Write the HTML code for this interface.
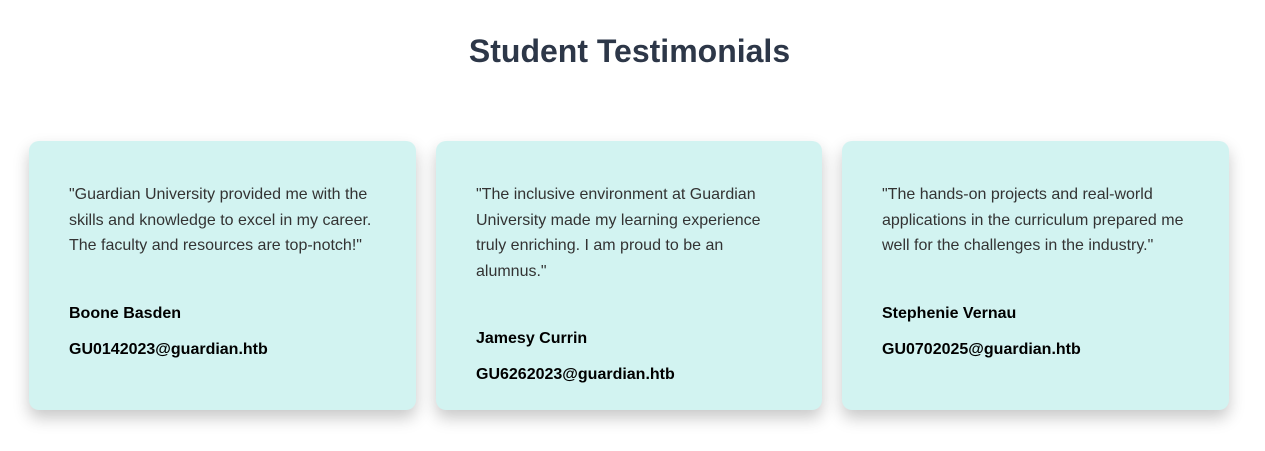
<!DOCTYPE html>
<html><head><style>
body{margin:0;background:#fff;font-family:"Liberation Sans",sans-serif;width:1265px;height:451px;overflow:hidden}
h1{margin:0;position:absolute;top:31px;left:-3px;width:1265px;text-align:center;font-size:32px;line-height:40px;color:#2d3748;font-weight:bold}
.wrap{position:absolute;top:141px;left:29px;display:flex;gap:20px;align-items:stretch}
.card{width:307px;background:#d2f3f1;border-radius:10px;padding:41px 40px 26px;box-shadow:0 8px 16px rgba(0,0,0,0.22)}
p{margin:0 0 46px;font-size:16px;line-height:25.6px;color:#333}
.n{font-weight:bold;font-size:16px;line-height:18px;color:#000;margin-bottom:18px}
.e{font-weight:bold;font-size:16px;line-height:18px;color:#000}
</style></head><body>
<h1>Student Testimonials</h1>
<div class="wrap">
<div class="card"><p>"Guardian University provided me with the skills and knowledge to excel in my career. The faculty and resources are top-notch!"</p><div class="n">Boone Basden</div><div class="e">GU0142023@guardian.htb</div></div>
<div class="card" style="width:306px"><p>"The inclusive environment at Guardian University made my learning experience truly enriching. I am proud to be an alumnus."</p><div class="n">Jamesy Currin</div><div class="e">GU6262023@guardian.htb</div></div>
<div class="card"><p>"The hands-on projects and real-world applications in the curriculum prepared me well for the challenges in the industry."</p><div class="n">Stephenie Vernau</div><div class="e">GU0702025@guardian.htb</div></div>
</div>
</body></html>
